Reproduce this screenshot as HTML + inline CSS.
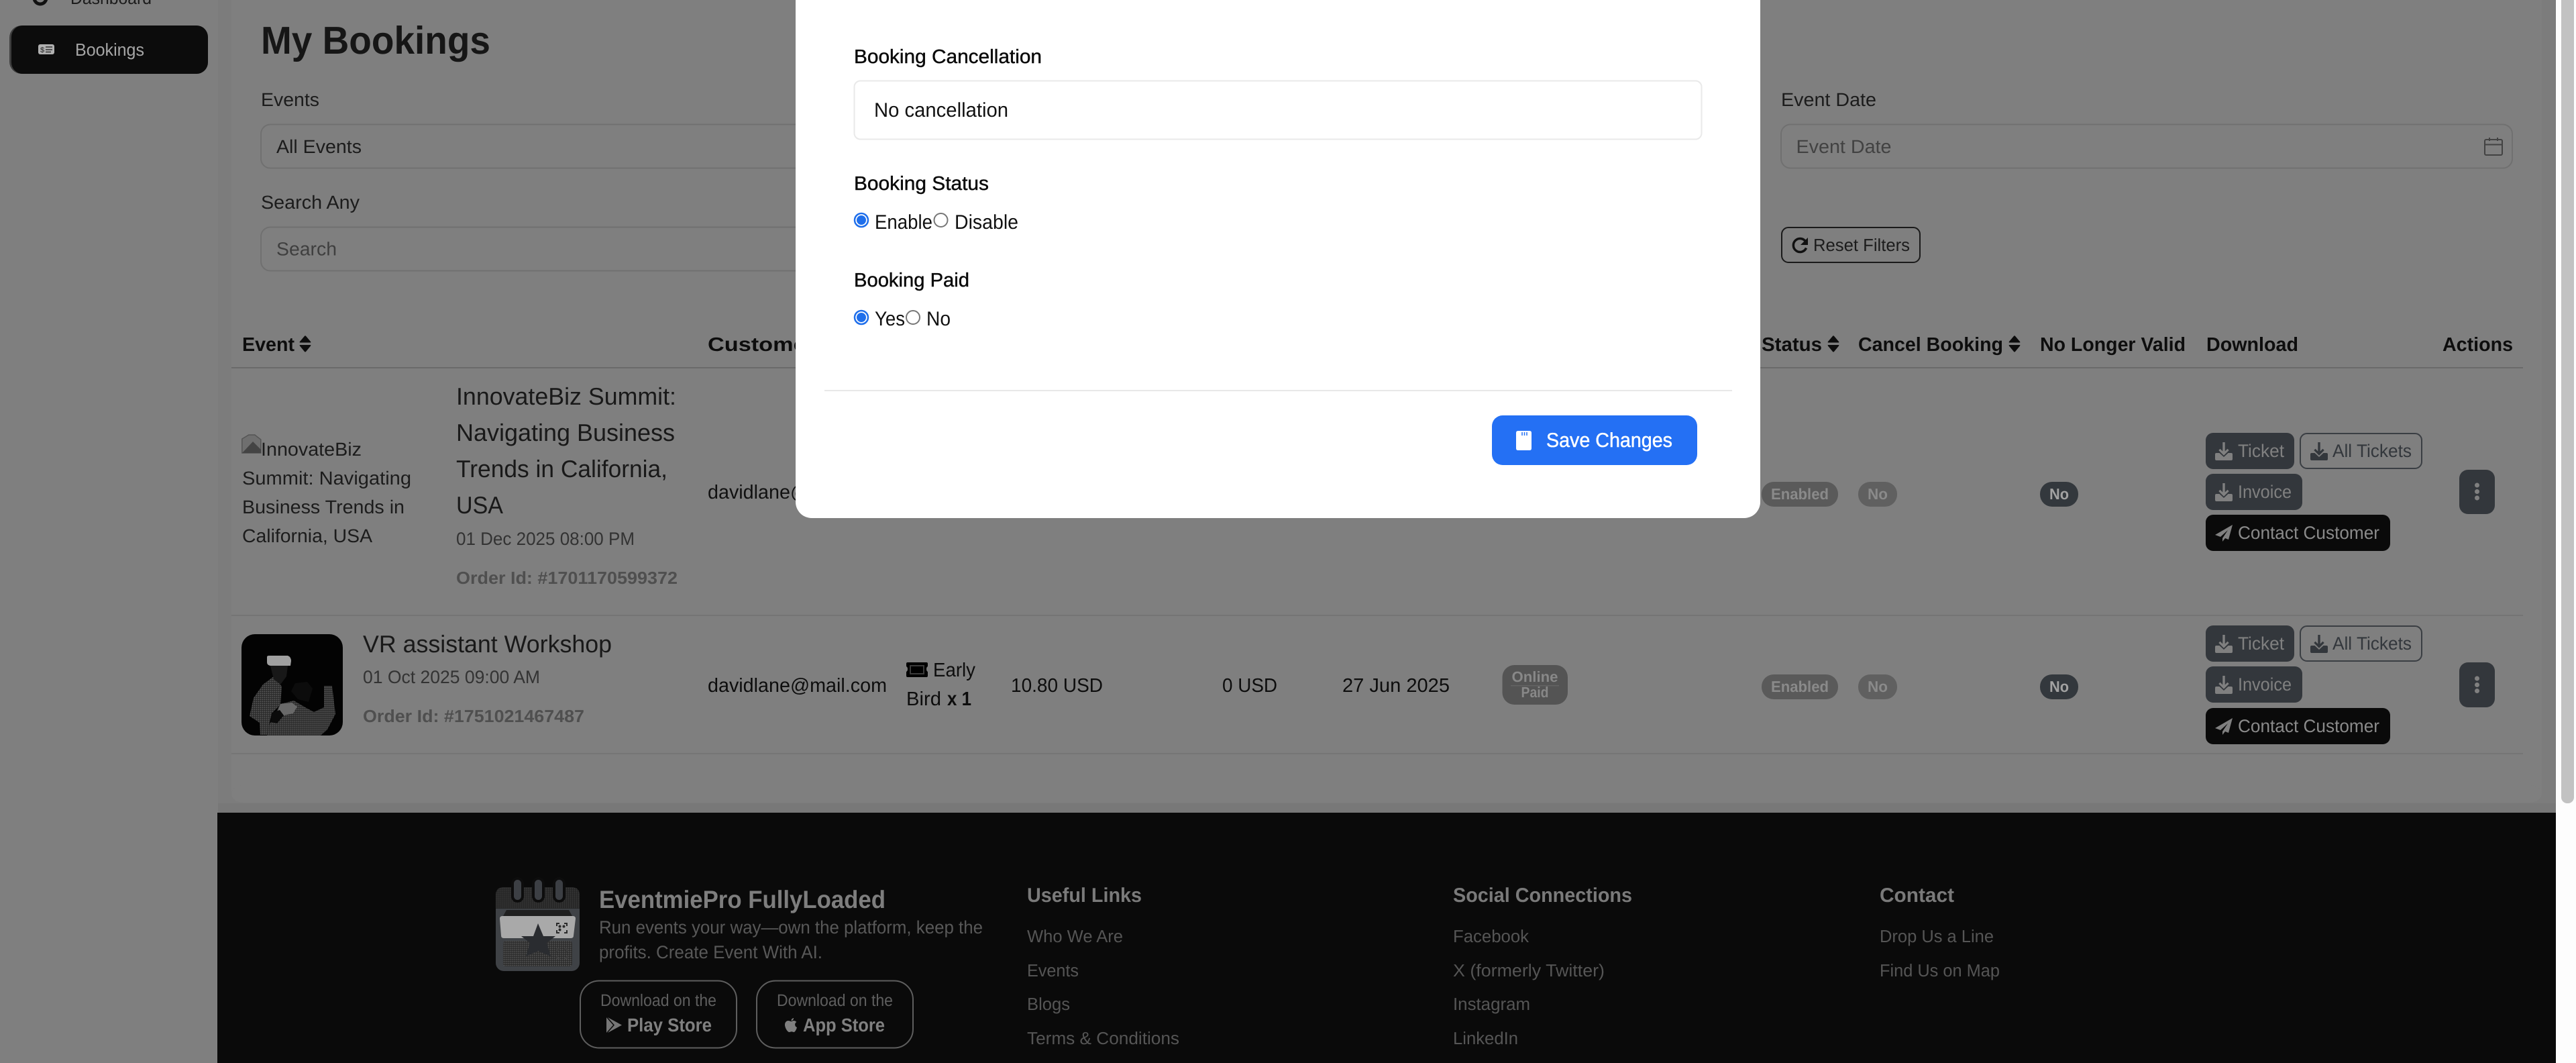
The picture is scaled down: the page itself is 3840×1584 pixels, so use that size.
<!DOCTYPE html>
<html lang="en">
<head>
<meta charset="utf-8">
<title>My Bookings</title>
<style>
html,body{margin:0;padding:0;width:3840px;height:1584px;overflow:hidden;background:#7f7f7f}
svg{display:block;position:absolute;left:0;top:0}
text{font-family:"Liberation Sans",Arial,sans-serif;text-rendering:geometricPrecision;white-space:pre}
.b{font-weight:700}
.m{stroke:currentColor;stroke-width:.45}
</style>
</head>
<body>
<svg xmlns="http://www.w3.org/2000/svg" width="3840" height="1584" viewBox="0 0 3840 1584">
<defs>
<symbol id="dl" viewBox="0 0 26 27"><path d="M11.300 0h3.400v13.500l3.800-3.800 2.200 2.300-7.700 7.700L5.300 12l2.200-2.300 3.800 3.800z"/><path d="M2 16h4.500l6.500 6 6.500-6H24q2 0 2 2v7q0 2-2 2H2q-2 0-2-2v-7q0-2 2-2z"/></symbol>
<symbol id="sort" viewBox="0 0 18 25"><path d="M1.500 10.500Q0 10.500 1 9L8 .8q1-1 2 0L17 9q1 1.500-.5 1.500zM1.500 14Q0 14 1 15.500L8 24q1 1 2 0l7-8.500q1-1.500-.5-1.500z"/></symbol>
<symbol id="plane" viewBox="0 0 26 25"><path d="M26 0 0 15l8 3 11-10-8 12v5l4-5 5 2z"/></symbol>
<pattern id="st" width="3" height="3" patternUnits="userSpaceOnUse"><rect width="3" height="3" fill="#2c2c2c"/><circle cx="1.500" cy="1.500" r=".9" fill="#5e5e5e"/></pattern>
<pattern id="st2" width="3" height="3" patternUnits="userSpaceOnUse"><rect width="3" height="3" fill="#262626"/><circle cx="1.500" cy="1.500" r=".8" fill="#414141"/></pattern>
</defs>

<!-- page base -->
<rect width="3840" height="1584" fill="#7f7f7f"/>
<rect x="325" width="3485" height="1211" fill="#7c7c7c"/>
<rect x="345" y="-40" width="3444" height="1236" rx="18" fill="#7f7f7f"/>
<rect x="325" y="1197" width="3485" height="14" fill="#787878"/>
<rect x="345" y="1170" width="3444" height="26" rx="18" fill="#7f7f7f"/>

<!-- scrollbar -->
<rect x="3810" width="30" height="1584" fill="#fdfdfd"/>
<rect x="3818" y="-20" width="19" height="1217" rx="9" fill="#c2c2c2"/>

<!-- sidebar -->
<circle cx="60" cy="-3" r="9" fill="none" stroke="#111" stroke-width="5"/>
<text x="105" y="6" font-size="26" fill="#1c1c1c" textLength="121" lengthAdjust="spacingAndGlyphs">Dashboard</text>
<rect x="14" y="38" width="296" height="72" rx="18" fill="#3e3e3e"/>
<rect x="17" y="38" width="293" height="72" rx="17" fill="#0c0c0c"/>
<rect x="57" y="66" width="24" height="15" rx="3" fill="#b0b0b0"/>
<path d="M68 70h10M68 74h10M68 77.500h8" stroke="#333" stroke-width="1.500"/>
<text x="60" y="78" font-size="11" fill="#222">$</text>
<text x="112" y="83" font-size="26" fill="#a6a6a6" textLength="103" lengthAdjust="spacingAndGlyphs">Bookings</text>

<!-- page heading and filters -->
<text x="389" y="80" class="b" font-size="58" fill="#161616" textLength="342" lengthAdjust="spacingAndGlyphs">My Bookings</text>
<text x="389" y="158" font-size="28" fill="#1c1c1c" textLength="87" lengthAdjust="spacingAndGlyphs">Events</text>
<rect x="389" y="185.500" width="900" height="65" rx="14" fill="#7f7f7f" stroke="#707070" stroke-width="2"/>
<text x="412" y="228" font-size="28" fill="#1c1c1c" textLength="127" lengthAdjust="spacingAndGlyphs">All Events</text>
<text x="389" y="311" font-size="28" fill="#1c1c1c" textLength="147" lengthAdjust="spacingAndGlyphs">Search Any</text>
<rect x="389" y="338.500" width="900" height="65" rx="14" fill="#7f7f7f" stroke="#707070" stroke-width="2"/>
<text x="412" y="380.500" font-size="28" fill="#3f3f3f" textLength="90" lengthAdjust="spacingAndGlyphs">Search</text>

<text x="2655" y="158" font-size="28" fill="#1c1c1c" textLength="142" lengthAdjust="spacingAndGlyphs">Event Date</text>
<rect x="2655" y="185.500" width="1090" height="65" rx="14" fill="#7f7f7f" stroke="#707070" stroke-width="2"/>
<text x="2677.500" y="228" font-size="28" fill="#424242" textLength="142" lengthAdjust="spacingAndGlyphs">Event Date</text>
<g fill="none" stroke="#424242" stroke-width="2"><rect x="3704" y="208" width="26" height="23" rx="2"/><path d="M3704 215.500h26M3711 205v5M3723 205v5"/></g>

<rect x="2656" y="339" width="206" height="52" rx="10" fill="none" stroke="#1a1a1a" stroke-width="2"/>
<path d="M2692 360.500A10 10 0 1 0 2692.500 369.500" fill="none" stroke="#111" stroke-width="3.500"/>
<path d="M2695 354v11h-11z" fill="#111"/>
<text x="2703" y="374" font-size="26" fill="#1c1c1c" textLength="144" lengthAdjust="spacingAndGlyphs">Reset Filters</text>

<!-- table header -->
<g fill="#0d0d0d" font-size="29">
<text x="361" y="523" class="b" textLength="78" lengthAdjust="spacingAndGlyphs">Event</text>
<use href="#sort" x="446" y="500" width="18" height="25"/>
<text x="1055" y="523" class="b" textLength="160" lengthAdjust="spacingAndGlyphs">Customer</text>
<text x="2626" y="523" class="b" textLength="90" lengthAdjust="spacingAndGlyphs">Status</text>
<use href="#sort" x="2724" y="500" width="18" height="25"/>
<text x="2770" y="523" class="b" textLength="216" lengthAdjust="spacingAndGlyphs">Cancel Booking</text>
<use href="#sort" x="2994" y="500" width="18" height="25"/>
<text x="3041" y="523" class="b" textLength="217" lengthAdjust="spacingAndGlyphs">No Longer Valid</text>
<text x="3289" y="523" class="b" textLength="137" lengthAdjust="spacingAndGlyphs">Download</text>
<text x="3641" y="523" class="b" textLength="105" lengthAdjust="spacingAndGlyphs">Actions</text>
</g>
<rect x="345" y="547" width="3416" height="2" fill="#6a6a6a"/>
<rect x="345" y="916" width="3416" height="2" fill="#747474"/>
<rect x="345" y="1122" width="3416" height="2" fill="#757575"/>

<!-- row 1 -->
<path d="M360.800 675V654l10-6h9l9 7v20z" fill="#6f6f6f" stroke="#555" stroke-width="1.500"/>
<path d="M361 675l16-17 12 12v5z" fill="#444"/>
<g fill="#1c1c1c" font-size="28">
<text x="389" y="679" textLength="150" lengthAdjust="spacingAndGlyphs">InnovateBiz</text>
<text x="361" y="722" textLength="252" lengthAdjust="spacingAndGlyphs">Summit: Navigating</text>
<text x="361" y="765" textLength="242" lengthAdjust="spacingAndGlyphs">Business Trends in</text>
<text x="361" y="808" textLength="194" lengthAdjust="spacingAndGlyphs">California, USA</text>
</g>
<g fill="#191919" font-size="36">
<text x="680" y="603" textLength="328" lengthAdjust="spacingAndGlyphs">InnovateBiz Summit:</text>
<text x="680" y="657" textLength="326" lengthAdjust="spacingAndGlyphs">Navigating Business</text>
<text x="680" y="711" textLength="315" lengthAdjust="spacingAndGlyphs">Trends in California,</text>
<text x="680" y="765" textLength="70" lengthAdjust="spacingAndGlyphs">USA</text>
</g>
<text x="680" y="812" font-size="27" fill="#333" textLength="266" lengthAdjust="spacingAndGlyphs">01 Dec 2025 08:00 PM</text>
<text x="680" y="870" class="b" font-size="26" fill="#4f4f4f" textLength="330" lengthAdjust="spacingAndGlyphs">Order Id: #1701170599372</text>
<text x="1055" y="743" font-size="29" fill="#111" textLength="267" lengthAdjust="spacingAndGlyphs">davidlane@mail.com</text>

<!-- row 2 -->
<clipPath id="th"><rect x="360" y="945" width="151" height="151" rx="20"/></clipPath>
<g clip-path="url(#th)">
<rect x="360" y="945" width="151" height="151" fill="#030303"/>
<path d="M372 1067l6-27 14-20 16-12 12 15-2 27-13 13-7 32h-10l-1-18z" fill="url(#st)"/>
<path d="M398 1096l3-15 17-32 20-5 17 10 13 7 15-7v-32h12l5 42-12 23-10 9z" fill="url(#st)"/>
<path d="M418 1049l17-2 8 6-6 10-14 3-9-7z" fill="#696969"/>
<path d="M398 979q0-2 3-2h28q5 2 5 8l-1 7h-30q-5-1-5-5z" fill="#a0a0a0"/>
<path d="M403 992h26l-2 16-9 12-10-8z" fill="#181818"/>
<path d="M405 1062l12-4 6 8-10 12-9-2z" fill="#0b0b0b"/>
<path d="M440 1018l18-2 8 10-6 20-16-4-10-12z" fill="#0c0c0c"/>
</g>
<text x="541" y="972" font-size="36" fill="#191919" textLength="371" lengthAdjust="spacingAndGlyphs">VR assistant Workshop</text>
<text x="541" y="1018" font-size="27" fill="#333" textLength="264" lengthAdjust="spacingAndGlyphs">01 Oct 2025 09:00 AM</text>
<text x="541" y="1076" class="b" font-size="26" fill="#4f4f4f" textLength="330" lengthAdjust="spacingAndGlyphs">Order Id: #1751021467487</text>
<text x="1055" y="1031" font-size="29" fill="#0d0d0d" textLength="267" lengthAdjust="spacingAndGlyphs">davidlane@mail.com</text>
<path d="M1353 987h28q2 0 2 2v4q-2 1-2 4t2 4v6q0 2-2 2h-28q-2 0-2-2v-6q2-1 2-4t-2-4v-4q0-2 2-2z" fill="#000"/>
<rect x="1356" y="991" width="22" height="14" fill="#3a3a3a"/>
<rect x="1358" y="993" width="18" height="10" fill="#000"/>
<g fill="#0d0d0d" font-size="29">
<text x="1391" y="1008" textLength="63" lengthAdjust="spacingAndGlyphs">Early</text>
<text x="1351" y="1051" textLength="52" lengthAdjust="spacingAndGlyphs">Bird</text>
<text x="1412" y="1051" class="b" textLength="36" lengthAdjust="spacingAndGlyphs">x 1</text>
<text x="1507" y="1031" textLength="137" lengthAdjust="spacingAndGlyphs">10.80 USD</text>
<text x="1822" y="1031" textLength="82" lengthAdjust="spacingAndGlyphs">0 USD</text>
<text x="2001" y="1031" textLength="160" lengthAdjust="spacingAndGlyphs">27 Jun 2025</text>
</g>
<rect x="2239.500" y="991" width="97.500" height="59" rx="18" fill="#545454"/>
<rect x="2252" y="1021" width="72" height="1.500" fill="#636363"/>
<text x="2253.500" y="1016" class="b" font-size="22" fill="#888" textLength="69" lengthAdjust="spacingAndGlyphs">Online</text>
<text x="2267.500" y="1039" class="b" font-size="22" fill="#888" textLength="41" lengthAdjust="spacingAndGlyphs">Paid</text>

<!-- badges row 1 -->
<g class="b" font-size="23">
<rect x="2626" y="718" width="114" height="37" rx="18" fill="#5a5a5a"/>
<text x="2640" y="744" fill="#8a8a8a" textLength="86" lengthAdjust="spacingAndGlyphs">Enabled</text>
<rect x="2770" y="718" width="58" height="37" rx="18" fill="#606060"/>
<text x="2784" y="744" fill="#8a8a8a" textLength="30" lengthAdjust="spacingAndGlyphs">No</text>
<rect x="3041" y="718" width="57" height="37" rx="18" fill="#33383d"/>
<text x="3055" y="744" fill="#a2a2a2" textLength="29" lengthAdjust="spacingAndGlyphs">No</text>
</g>
<!-- buttons row 1 -->
<rect x="3288" y="645" width="132" height="54" rx="11" fill="#33373c"/>
<use href="#dl" x="3302" y="659" width="26" height="27" fill="#808080"/>
<text x="3336" y="681" font-size="27" fill="#808080" textLength="69" lengthAdjust="spacingAndGlyphs">Ticket</text>
<rect x="3429" y="646" width="181" height="52" rx="10" fill="none" stroke="#3a3e43" stroke-width="2"/>
<use href="#dl" x="3444" y="659" width="26" height="27" fill="#33373c"/>
<text x="3477" y="681" font-size="27" fill="#33373c" textLength="118" lengthAdjust="spacingAndGlyphs">All Tickets</text>
<rect x="3288" y="706" width="144" height="54" rx="11" fill="#33373c"/>
<use href="#dl" x="3302" y="720" width="26" height="27" fill="#808080"/>
<text x="3336" y="742" font-size="27" fill="#808080" textLength="80" lengthAdjust="spacingAndGlyphs">Invoice</text>
<rect x="3288" y="767" width="275" height="54" rx="11" fill="#0a0a0a"/>
<use href="#plane" x="3302" y="782" width="26" height="25" fill="#808080"/>
<text x="3336" y="803" font-size="27" fill="#8a8a8a" textLength="211" lengthAdjust="spacingAndGlyphs">Contact Customer</text>
<rect x="3666" y="700" width="53" height="66" rx="13" fill="#33373c"/>
<circle cx="3692.500" cy="723" r="3.500" fill="#808080"/><circle cx="3692.500" cy="732.500" r="3.500" fill="#808080"/><circle cx="3692.500" cy="742" r="3.500" fill="#808080"/>

<!-- badges row 2 -->
<g class="b" font-size="23">
<rect x="2626" y="1005" width="114" height="37" rx="18" fill="#5a5a5a"/>
<text x="2640" y="1031" fill="#8a8a8a" textLength="86" lengthAdjust="spacingAndGlyphs">Enabled</text>
<rect x="2770" y="1005" width="58" height="37" rx="18" fill="#606060"/>
<text x="2784" y="1031" fill="#8a8a8a" textLength="30" lengthAdjust="spacingAndGlyphs">No</text>
<rect x="3041" y="1005" width="57" height="37" rx="18" fill="#33383d"/>
<text x="3055" y="1031" fill="#a2a2a2" textLength="29" lengthAdjust="spacingAndGlyphs">No</text>
</g>
<!-- buttons row 2 -->
<rect x="3288" y="932" width="132" height="54" rx="11" fill="#33373c"/>
<use href="#dl" x="3302" y="946" width="26" height="27" fill="#808080"/>
<text x="3336" y="968" font-size="27" fill="#808080" textLength="69" lengthAdjust="spacingAndGlyphs">Ticket</text>
<rect x="3429" y="933" width="181" height="52" rx="10" fill="none" stroke="#3a3e43" stroke-width="2"/>
<use href="#dl" x="3444" y="946" width="26" height="27" fill="#33373c"/>
<text x="3477" y="968" font-size="27" fill="#33373c" textLength="118" lengthAdjust="spacingAndGlyphs">All Tickets</text>
<rect x="3288" y="993" width="144" height="54" rx="11" fill="#33373c"/>
<use href="#dl" x="3302" y="1007" width="26" height="27" fill="#808080"/>
<text x="3336" y="1029" font-size="27" fill="#808080" textLength="80" lengthAdjust="spacingAndGlyphs">Invoice</text>
<rect x="3288" y="1055" width="275" height="54" rx="11" fill="#0a0a0a"/>
<use href="#plane" x="3302" y="1070" width="26" height="25" fill="#808080"/>
<text x="3336" y="1091" font-size="27" fill="#8a8a8a" textLength="211" lengthAdjust="spacingAndGlyphs">Contact Customer</text>
<rect x="3666" y="987" width="53" height="67" rx="13" fill="#33373c"/>
<circle cx="3692.500" cy="1011" r="3.500" fill="#808080"/><circle cx="3692.500" cy="1020.500" r="3.500" fill="#808080"/><circle cx="3692.500" cy="1029.500" r="3.500" fill="#808080"/>

<!-- footer -->
<rect x="324" y="1211" width="3486" height="373" fill="#0a0a0a"/>
<!-- logo -->
<rect x="739" y="1322" width="125" height="125" rx="12" fill="#3f4246"/>
<path d="M739 1334q0-12 12-12h101q12 0 12 12v20H739z" fill="url(#st2)"/>
<g fill="#3c3f44" stroke="#0d0d0d" stroke-width="4"><rect x="764" y="1309" width="15" height="34" rx="7.500"/><rect x="795" y="1309" width="15" height="34" rx="7.500"/><rect x="826" y="1309" width="15" height="34" rx="7.500"/></g>
<path d="M750 1365l5-9h93l5 9z" fill="#1f1f1f"/>
<path d="M749 1365h105q4 0 4 4l-3 25q0 4-4 4H751q-4 0-4-4l-2-25q0-4 4-4z" fill="#a9a9a9"/>
<rect x="750" y="1402" width="103" height="38" rx="4" fill="url(#st)"/>
<path d="M802 1376l8 19h18l-13 10 6 20-19-8-18 8 6-20-13-10h18z" fill="#2a2c30"/>
<g fill="none" stroke="#2a2a2a" stroke-width="2"><path d="M830 1380v-4h4M841 1376h4v4M845 1386v4h-4M834 1390h-4v-4"/></g>
<g fill="#2a2a2a"><circle cx="834.500" cy="1380.500" r="2"/><circle cx="840.500" cy="1380.500" r="2"/><circle cx="834.500" cy="1385.500" r="2"/></g>
<g fill="none" stroke="#3e3e3e" stroke-width="2"><path d="M830 1418v-4h4M841 1414h4v4M845 1424v4h-4M834 1428h-4v-4"/></g>

<text x="893" y="1353" class="b" font-size="37" fill="#7e7e7e" textLength="427" lengthAdjust="spacingAndGlyphs">EventmiePro FullyLoaded</text>
<text x="893" y="1391" font-size="27" fill="#585858" textLength="572" lengthAdjust="spacingAndGlyphs">Run events your way—own the platform, keep the</text>
<text x="893" y="1428" font-size="27" fill="#585858" textLength="333" lengthAdjust="spacingAndGlyphs">profits. Create Event With AI.</text>

<rect x="865" y="1461.500" width="233" height="100" rx="28" fill="none" stroke="#5e5e5e" stroke-width="2"/>
<text x="895" y="1499" font-size="25" fill="#5e5e5e" textLength="173" lengthAdjust="spacingAndGlyphs">Download on the</text>
<path d="M904 1515l23 12.500-23 12.500z" fill="#777"/>
<path d="M904 1515l11 12.500-11 12.500" fill="none" stroke="#0a0a0a" stroke-width="1.500"/>
<text x="935" y="1537" class="b" font-size="28" fill="#808080" textLength="126" lengthAdjust="spacingAndGlyphs">Play Store</text>

<rect x="1128" y="1461.500" width="233" height="100" rx="28" fill="none" stroke="#5e5e5e" stroke-width="2"/>
<text x="1158" y="1499" font-size="25" fill="#5e5e5e" textLength="173" lengthAdjust="spacingAndGlyphs">Download on the</text>
<g transform="translate(1170 1517)"><path d="M13 0c.2 2-1.500 4-3.500 4C9.300 2.200 11 .3 13 0zM9.500 5c1 0 2.200-1 3.800-1 1.500 0 3 .7 4 2-3.300 2-2.800 6.500.7 8-.8 2.300-2.500 7-4.600 7-1.300 0-1.800-.8-3.400-.8s-2.200.8-3.400.8C4 21 0 14.500 0 10c0-3.800 2.500-6 5-6 1.800 0 3.300 1 4.500 1z" fill="#808080"/></g>
<text x="1197" y="1537" class="b" font-size="28" fill="#808080" textLength="122" lengthAdjust="spacingAndGlyphs">App Store</text>

<g class="b" font-size="30" fill="#7a7a7a">
<text x="1531" y="1344" textLength="171" lengthAdjust="spacingAndGlyphs">Useful Links</text>
<text x="2166" y="1344" textLength="267" lengthAdjust="spacingAndGlyphs">Social Connections</text>
<text x="2802" y="1344" textLength="111" lengthAdjust="spacingAndGlyphs">Contact</text>
</g>
<g font-size="26" fill="#555">
<text x="1531" y="1404" textLength="143" lengthAdjust="spacingAndGlyphs">Who We Are</text>
<text x="1531" y="1455" textLength="77" lengthAdjust="spacingAndGlyphs">Events</text>
<text x="1531" y="1505" textLength="64" lengthAdjust="spacingAndGlyphs">Blogs</text>
<text x="1531" y="1556" textLength="227" lengthAdjust="spacingAndGlyphs">Terms &amp; Conditions</text>
<text x="2166" y="1404" textLength="113" lengthAdjust="spacingAndGlyphs">Facebook</text>
<text x="2166" y="1455" textLength="226" lengthAdjust="spacingAndGlyphs">X (formerly Twitter)</text>
<text x="2166" y="1505" textLength="115" lengthAdjust="spacingAndGlyphs">Instagram</text>
<text x="2166" y="1556" textLength="97" lengthAdjust="spacingAndGlyphs">LinkedIn</text>
<text x="2802" y="1404" textLength="170" lengthAdjust="spacingAndGlyphs">Drop Us a Line</text>
<text x="2802" y="1455" textLength="179" lengthAdjust="spacingAndGlyphs">Find Us on Map</text>
</g>

<!-- modal -->
<rect x="1186" y="-40" width="1438" height="812" rx="24" fill="#fff"/>
<text x="1273" y="94" class="m" font-size="29" fill="#0a0a0a" color="#0a0a0a" textLength="280" lengthAdjust="spacingAndGlyphs">Booking Cancellation</text>
<rect x="1273.500" y="120.500" width="1263" height="87" rx="9" fill="#fff" stroke="#e9e9e9" stroke-width="2"/>
<text x="1303" y="174" font-size="30" fill="#111" textLength="200" lengthAdjust="spacingAndGlyphs">No cancellation</text>
<text x="1273" y="283" class="m" font-size="29" fill="#0a0a0a" color="#0a0a0a" textLength="201" lengthAdjust="spacingAndGlyphs">Booking Status</text>
<circle cx="1284" cy="328" r="10" fill="#fff" stroke="#1f6feb" stroke-width="2.500"/><circle cx="1284" cy="328" r="7" fill="#1f6feb"/>
<text x="1304" y="341" font-size="30" fill="#111" textLength="86" lengthAdjust="spacingAndGlyphs">Enable</text>
<circle cx="1402.500" cy="328" r="10" fill="#fff" stroke="#767676" stroke-width="2"/>
<text x="1423" y="341" font-size="30" fill="#111" textLength="95" lengthAdjust="spacingAndGlyphs">Disable</text>
<text x="1273" y="427" class="m" font-size="29" fill="#0a0a0a" color="#0a0a0a" textLength="172" lengthAdjust="spacingAndGlyphs">Booking Paid</text>
<circle cx="1284" cy="473" r="10" fill="#fff" stroke="#1f6feb" stroke-width="2.500"/><circle cx="1284" cy="473" r="7" fill="#1f6feb"/>
<text x="1304" y="485" font-size="30" fill="#111" textLength="45" lengthAdjust="spacingAndGlyphs">Yes</text>
<circle cx="1361" cy="473" r="10" fill="#fff" stroke="#767676" stroke-width="2"/>
<text x="1381" y="485" font-size="30" fill="#111" textLength="36" lengthAdjust="spacingAndGlyphs">No</text>
<rect x="1229" y="581" width="1353" height="2" fill="#e8e8e8"/>
<rect x="2224" y="619" width="306" height="74" rx="16" fill="#2470f4"/>
<path d="M2263 642h17q3 0 3 3v23q0 3-3 3h-17q-3 0-3-3v-23q0-3 3-3z" fill="#fff"/>
<path d="M2269 644v5M2272.500 644v5M2276 644v5" stroke="#2470f4" stroke-width="1.500"/>
<text x="2305" y="666" class="m" font-size="30" fill="#fff" color="#fff" textLength="188" lengthAdjust="spacingAndGlyphs">Save Changes</text>
</svg>
</body>
</html>
